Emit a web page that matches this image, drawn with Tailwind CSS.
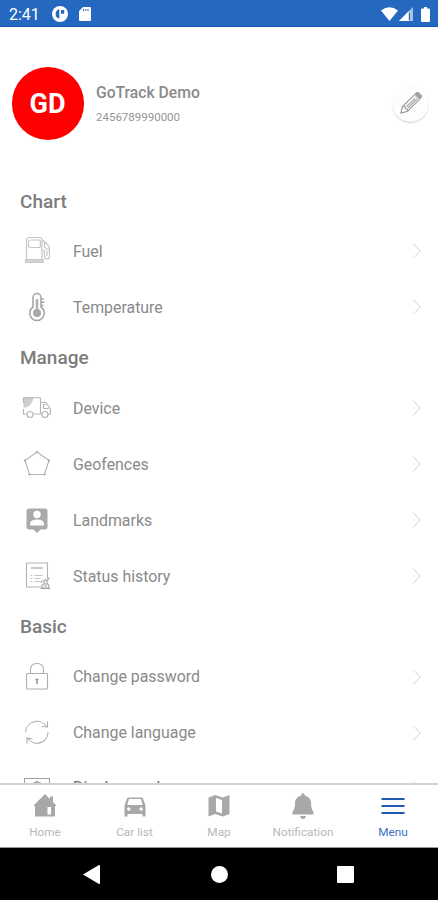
<!DOCTYPE html>
<html lang="en">
<head>
    <meta charset="UTF-8">
    <meta name="viewport" content="width=device-width, initial-scale=1.0">
    <script src="https://cdn.jsdelivr.net/npm/@tailwindcss/browser@4"></script>
    <title>GoTrack Menu</title>
</head>
<body class="bg-white">
<div class="w-[438px] h-[900px] flex flex-col overflow-hidden font-['Roboto',sans-serif] text-[#8a8a8a]">

    <!-- Status bar -->
    <div class="h-[27px] shrink-0 bg-[#2468bf] border-b border-[#1757ab] flex items-center pl-[9px] pr-2 text-white">
        <span class="text-base w-[43px] pt-[3px]">2:41</span>
        <svg class="w-4 h-4 mt-0.5" viewBox="0 0 16 16"><circle cx="8" cy="8" r="8" fill="#fff"/><path d="M7.300 3.200C4.800 3.600 3.600 5.600 3.600 8s1.200 4 3.700 4.600V3.200zM9 4h3.200v3.800H9z" fill="#2468bf"/></svg>
        <svg class="w-3 h-[14px] ml-[11px] mt-0.5" viewBox="0 0 12 14"><path d="M4 0h7q1 0 1 1v12q0 1-1 1H1q-1 0-1-1V4z" fill="#fff"/><path d="M4.500 2v2M6.800 2v2M9 2v2" stroke="#2468bf" stroke-width="1"/></svg>
        <svg class="w-[17px] h-[14px] ml-auto mt-0.5" viewBox="0 0 17 14"><path d="M0 3.500Q8.500-3 17 3.500L8.500 14z" fill="#fff"/></svg>
        <svg class="w-[14px] h-[14px] ml-[1px] mt-0.5" viewBox="0 0 14 14"><path d="M0 14L14 0v14z" fill="#fff" fill-opacity=".6"/><path d="M0 14L9.500 4.500V14z" fill="#fff"/><path d="M10.500 6v7" stroke="#2468bf" stroke-width="1"/></svg>
        <svg class="w-[9px] h-[15px] ml-2 mt-0.5" viewBox="0 0 9 15"><path d="M3 0h3v1.500h2q1 0 1 1V14q0 1-1 1H1q-1 0-1-1V2.500q0-1 1-1h2z" fill="#fff"/></svg>
    </div>

    <!-- Profile -->
    <div class="h-[152px] shrink-0 flex items-center pl-3 pr-[9px]">
        <div class="w-[72px] h-[73px] rounded-full bg-[#fe0000] text-white text-[27px] font-bold flex items-center justify-center pt-0.5 pr-px">GD</div>
        <div class="ml-3 pt-1">
            <p class="text-[15.700px] leading-6 font-medium text-[#8a8a8a]">GoTrack Demo</p>
            <p class="text-[11.500px] leading-6 text-[#959595]">2456789990000</p>
        </div>
        <div class="ml-auto w-[37px] h-[37px] rounded-full bg-[#fdfdfd] shadow-[0_1px_1px_rgba(0,0,0,0.18)] flex items-center justify-center">
            <svg class="w-[22px] h-[22px]" viewBox="0 0 22 22" fill="none" stroke="#9da0a1" stroke-width="1.200" stroke-linejoin="round"><path d="M.8 21.200L2.600 14.500 14.300 2.800 19.200 7.700 7.500 19.400z"/><path d="M2.600 14.500l2.400.1.300 2.100 2 .4.2 2.300M6.500 14.600L15 6.100M7.800 16.200L17 7"/><path d="M15.200 1.900L17 .6q.8-.4 1.500.3l2.600 2.600q.6.700.2 1.400l-1.200 1.900z" fill="#9da0a1"/><path d="M14.300 2.800l4.900 4.900" stroke="#fff" stroke-width=".7"/></svg>
        </div>
    </div>

    <!-- Menu list -->
    <div class="h-[604px] shrink-0 overflow-hidden">
        <h2 class="h-11 flex items-center pl-5 pt-0.5 text-[19px] font-medium text-[#7c7c7c]">Chart</h2>
        <div class="h-14 flex items-center pl-[22px] pr-[17px]">
            <svg class="w-[30px] h-[30px]" viewBox="0 0 30 30" fill="none" stroke="#c6c6c6" stroke-width="1.200"><path d="M4.500 23.500V4q0-2.500 2.500-2.500h10.500q2.500 0 2.500 2.500v19.500M3.500 23.500h17.500v3H3.500z"/><rect x="6.500" y="4" width="12" height="7.500" rx="2"/><path d="M20.500 4l5.500 5q1.500 1.500 1.500 4v7.500q0 2.500-2.500 2.500t-2.500-2.500v-6h-2M22.500 6.500v4q1 2.500 4.500 3.500M25 15v5"/><path d="M3.500 25h17.500" stroke-width="1.500"/></svg>
            <span class="ml-[21px] pt-0.5 text-[15.900px]">Fuel</span>
            <svg class="w-[9px] h-4 ml-auto" viewBox="0 0 9 16" fill="none" stroke="#d2d2d2"><path d="M1 .5L8.300 8 1 15.500"/></svg>
        </div>
        <div class="h-14 flex items-center pl-[22px] pr-[17px]">
            <svg class="w-[30px] h-[30px]" viewBox="0 0 30 30" fill="none" stroke="#a3a3a3" stroke-width="1.500"><path d="M11 15V5.500a4 4 0 0 1 8 0V15a7.300 7.300 0 1 1-8 0z"/><path d="M15 7v14" stroke-width="2.500" stroke="#b0b0b0"/><circle cx="15" cy="21" r="4" fill="#a8a8a8" stroke="none"/><path d="M19 7h2.500M19 10.200h3.500M19 13.400h2.500"/></svg>
            <span class="ml-[21px] pt-0.5 text-[15.900px]">Temperature</span>
            <svg class="w-[9px] h-4 ml-auto" viewBox="0 0 9 16" fill="none" stroke="#d2d2d2"><path d="M1 .5L8.300 8 1 15.500"/></svg>
        </div>

        <h2 class="h-[45px] flex items-center pl-5 pt-0.5 text-[19px] font-medium text-[#7c7c7c]">Manage</h2>
        <div class="h-14 flex items-center pl-[22px] pr-[17px]">
            <svg class="w-[30px] h-[30px]" viewBox="0 0 30 30" fill="none" stroke="#b4b4b4" stroke-width="1.100"><path d="M1.500 5h10q-1.500 7-7.500 9.500H1.500z" fill="#cecece" stroke="none"/><path d="M1 4.800h16.500q1 0 1 1v15.200h-7M1.500 5v5M1.500 16v5h3M18.500 9.500h5.500l4.500 7v4.500h-3M18.500 21h1.500M26.500 15.500h-5v-4h2.500"/><circle cx="8" cy="21.500" r="3"/><circle cx="23" cy="21.500" r="3"/></svg>
            <span class="ml-[21px] pt-0.5 text-[15.900px]">Device</span>
            <svg class="w-[9px] h-4 ml-auto" viewBox="0 0 9 16" fill="none" stroke="#d2d2d2"><path d="M1 .5L8.300 8 1 15.500"/></svg>
        </div>
        <div class="h-14 flex items-center pl-[22px] pr-[17px]">
            <svg class="w-[30px] h-[30px]" viewBox="0 0 30 30" fill="none" stroke="#b4b4b4" stroke-width="1.100"><path d="M15 3L27 11.500 22.500 25.500h-15L3 11.500z"/><g fill="#a5a5a5" stroke="none"><circle cx="15" cy="3" r="1.100"/><circle cx="27" cy="11.500" r="1.100"/><circle cx="22.500" cy="25.500" r="1.100"/><circle cx="7.500" cy="25.500" r="1.100"/><circle cx="3" cy="11.500" r="1.100"/></g></svg>
            <span class="ml-[21px] pt-0.5 text-[15.900px]">Geofences</span>
            <svg class="w-[9px] h-4 ml-auto" viewBox="0 0 9 16" fill="none" stroke="#d2d2d2"><path d="M1 .5L8.300 8 1 15.500"/></svg>
        </div>
        <div class="h-14 flex items-center pl-[22px] pr-[17px]">
            <svg class="w-[30px] h-[30px]" viewBox="0 0 30 30"><path d="M7 3.500h16q2.500 0 2.500 2.500V22q0 2.500-2.500 2.500h-4.500L15 28l-3.500-3.500H7q-2.500 0-2.500-2.500V6Q4.500 3.500 7 3.500z" fill="#aaa"/><circle cx="15" cy="9.500" r="3.700" fill="#fff"/><path d="M8 20.500V19q0-4.500 7-4.500t7 4.500v1.500z" fill="#fff"/></svg>
            <span class="ml-[21px] pt-0.5 text-[15.900px]">Landmarks</span>
            <svg class="w-[9px] h-4 ml-auto" viewBox="0 0 9 16" fill="none" stroke="#d2d2d2"><path d="M1 .5L8.300 8 1 15.500"/></svg>
        </div>
        <div class="h-14 flex items-center pl-[22px] pr-[17px]">
            <svg class="w-[30px] h-[30px]" viewBox="0 0 30 30" fill="none" stroke="#b4b4b4" stroke-width="1.100"><path d="M19 26H4.500V2H25.500v16"/><path d="M9 7h12" stroke-width="2" stroke="#cacaca"/><path d="M8.500 14.500h2M12.500 14.500h8M8.500 17.500h2M12.500 17.500h6M8.500 20.500h2M12.500 20.500h5" stroke="#c4c4c4"/><path d="M20 27v-2.500l2-2V20l1.500-1.500L25 20v2.500l2 2V27zM18.500 27.500h9.500M21 23h4.500M20.500 19.500l-2 2M25.500 19.500l2-3M22 25h3" stroke="#a2a2a2"/></svg>
            <span class="ml-[21px] pt-0.5 text-[15.900px]">Status history</span>
            <svg class="w-[9px] h-4 ml-auto" viewBox="0 0 9 16" fill="none" stroke="#d2d2d2"><path d="M1 .5L8.300 8 1 15.500"/></svg>
        </div>

        <h2 class="h-[45px] flex items-center pl-5 pt-px text-[19px] font-medium text-[#7c7c7c]">Basic</h2>
        <div class="h-14 flex items-center pl-[22px] pr-[17px]">
            <svg class="w-[30px] h-[30px]" viewBox="0 0 30 30" fill="none" stroke="#aeaeae" stroke-width="1.100"><rect x="4.500" y="11.500" width="21" height="15.500" rx="1"/><path d="M8.500 11.500V8q0-6.500 6.500-6.500T21.500 8v3.500"/><path d="M13.500 17.500h3M15 17.500v4.500" stroke-width="1.500" stroke="#959595"/></svg>
            <span class="ml-[21px] text-[15.900px]">Change password</span>
            <svg class="w-[9px] h-4 ml-auto" viewBox="0 0 9 16" fill="none" stroke="#d2d2d2"><path d="M1 .5L8.300 8 1 15.500"/></svg>
        </div>
        <div class="h-14 flex items-center pl-[22px] pr-[17px]">
            <svg class="w-[30px] h-[30px]" viewBox="0 0 30 30" fill="none" stroke="#aeaeae" stroke-width="1.100"><path d="M3.500 14A11.500 11.500 0 0 1 24.500 8.500M25.500 3.500V9l-6-.5M26 14A11 11 0 0 1 6 20.500M5 25.500v-5.500l5.500 1"/></svg>
            <span class="ml-[21px] text-[15.900px]">Change language</span>
            <svg class="w-[9px] h-4 ml-auto" viewBox="0 0 9 16" fill="none" stroke="#d2d2d2"><path d="M1 .5L8.300 8 1 15.500"/></svg>
        </div>
        <div class="h-14 flex items-center pl-[22px] pr-[17px]">
            <svg class="w-[30px] h-[30px]" viewBox="0 0 30 30" fill="none" stroke="#a0a0a0" stroke-width="1"><rect x="2.500" y="4.500" width="25" height="18"/><circle cx="15" cy="13.500" r="5"/><path d="M11 9l2-.5 1-1h2l1 1 2 .5M10 27h10"/></svg>
            <span class="ml-[21px] pb-0.5 text-[15.900px] text-[#707070]">Display mode</span>
            <svg class="w-[9px] h-4 ml-auto" viewBox="0 0 9 16" fill="none" stroke="#d2d2d2"><path d="M1 .5L8.300 8 1 15.500"/></svg>
        </div>
    </div>

    <!-- Bottom tabs -->
    <div class="h-[65px] shrink-0 border-t-2 border-[#d2d2d2] border-b border-b-[#999] bg-white flex text-[11.800px] text-[#b8b8b8]">
        <div class="w-[90px] flex flex-col items-center pt-2">
            <svg class="w-6 h-[26px]" viewBox="0 0 24 26" fill="#a8a8a8"><path d="M12 1l5 5V3.500h3V9l3 3v1h-1v10.500H2V13H1v-1z"/><rect x="14.500" y="14" width="3.500" height="7.500" fill="#fff"/></svg>
            <span class="mt-[5px] leading-4">Home</span>
        </div>
        <div class="w-[89px] flex flex-col items-center pt-2">
            <svg class="w-6 h-[26px]" viewBox="0 0 24 26"><path d="M5.500 4.500h13q1 0 1.500 1l2.500 7v11h-3V21h-15v2.500h-3v-11l2.500-7q.5-1 1.500-1z" fill="#a8a8a8"/><path d="M6 6h12l1.700 6H4.300z" fill="#fff"/><circle cx="5.800" cy="16" r="1.700" fill="#fff"/><circle cx="18.200" cy="16" r="1.700" fill="#fff"/></svg>
            <span class="mt-[5px] leading-4">Car list</span>
        </div>
        <div class="w-[80px] flex flex-col items-center pt-2">
            <svg class="w-6 h-[26px]" viewBox="0 0 24 26"><path d="M1.500 4.500L8 2l8 2.500L22.500 2v19L16 23.500 8 21l-6.500 2.500z" fill="#a8a8a8"/><path d="M9 5l6 2v13.500l-6-2z" fill="#fff"/></svg>
            <span class="mt-[5px] leading-4">Map</span>
        </div>
        <div class="w-[88px] flex flex-col items-center pt-2">
            <svg class="w-6 h-[26px]" viewBox="0 0 24 26" fill="#a8a8a8"><path d="M12 0q1.800 0 1.800 2.500 5.700 1.500 6.200 7 0 7 2.500 9.500v2.500h-21V19Q4 16.500 4 9.500q.5-5.500 6.200-7Q10.200 0 12 0zM9 23h6q-.5 3-3 3t-3-3z"/></svg>
            <span class="mt-[5px] leading-4">Notification</span>
        </div>
        <div class="flex-1 flex flex-col items-center pt-2 pl-px text-[#3b6fc2]">
            <svg class="w-6 h-[26px]" viewBox="0 0 24 26" stroke="#1f5bb5" stroke-width="2"><path d="M.5 6h23M.5 13h23M.5 20h23"/></svg>
            <span class="mt-[5px] leading-4">Menu</span>
        </div>
    </div>

    <!-- System navigation -->
    <div class="flex-1 bg-black flex items-center">
        <svg class="w-[17px] h-[19px] ml-[83px]" viewBox="0 0 17 19" fill="#fff"><path d="M0 9.500L15.500.3Q17-.3 17 1v17q0 1.300-1.500.7z"/></svg>
        <div class="w-[17px] h-[17px] rounded-full bg-white ml-[111px]"></div>
        <div class="w-[17px] h-[17px] rounded-[1px] bg-white ml-[109px]"></div>
    </div>
</div>
</body>
</html>
